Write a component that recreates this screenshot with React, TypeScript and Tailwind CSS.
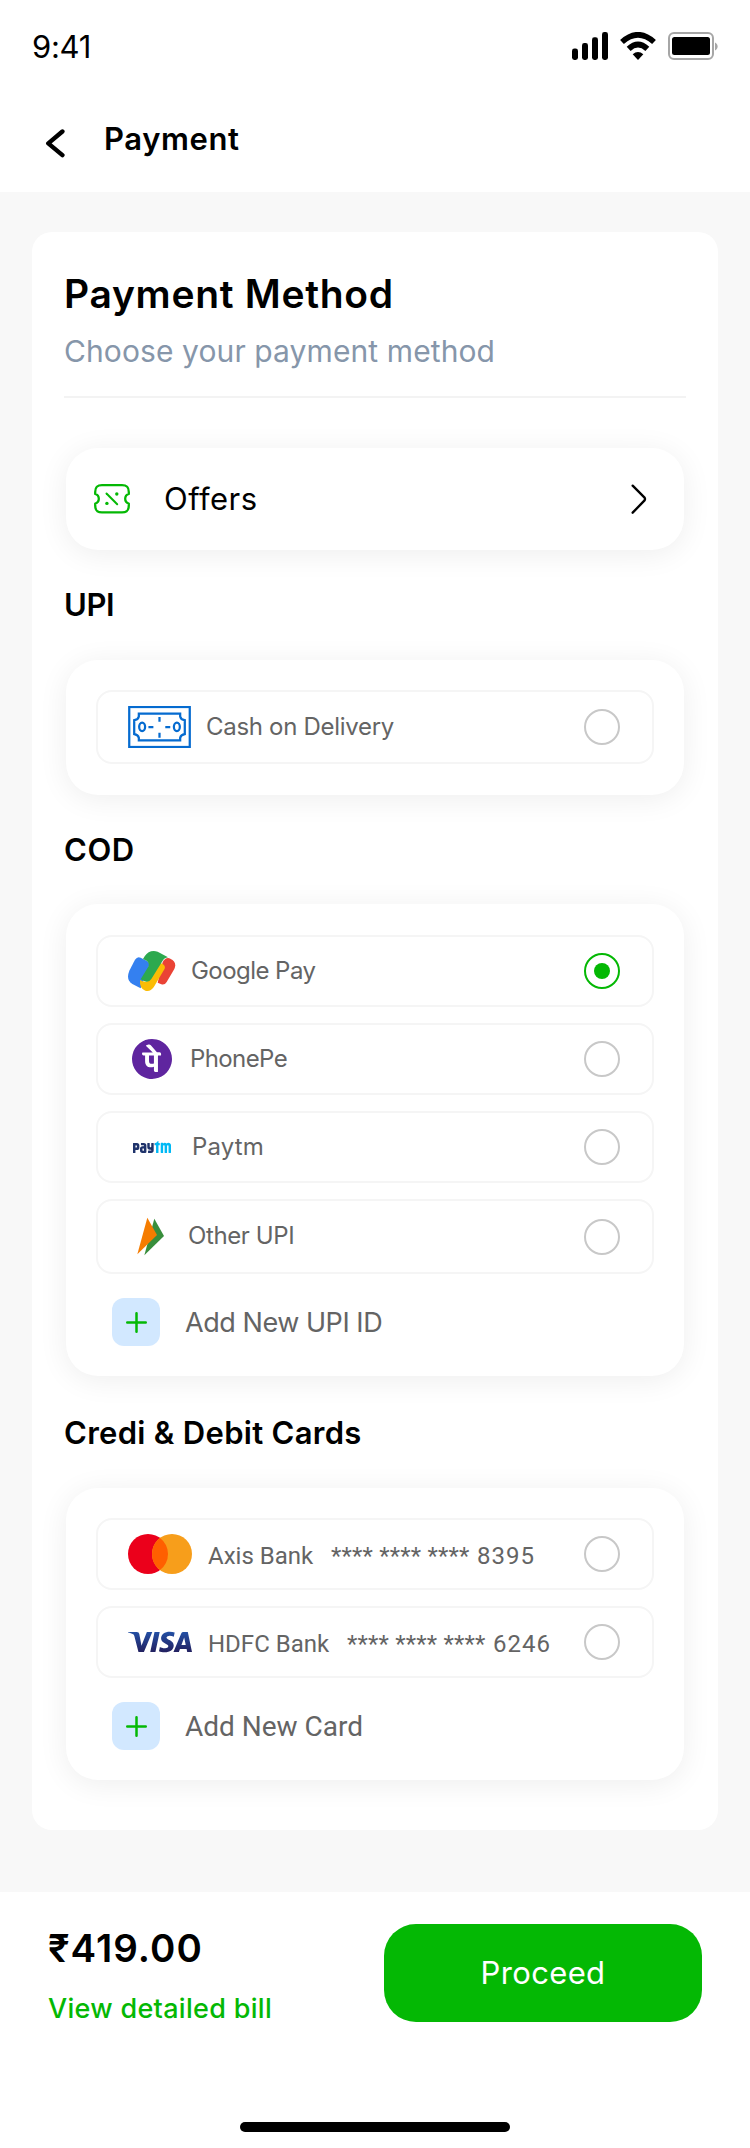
import type { ReactNode } from "react";
import { SiPaytm, SiPhonepe, SiVisa } from "react-icons/si";

function SignalIcon() {
  return (
    <svg className="h-7 w-9" viewBox="0 0 36 28" fill="#000">
      <rect x="0" y="16.5" width="6" height="11.5" rx="2.4" />
      <rect x="10" y="11" width="6" height="17" rx="2.4" />
      <rect x="20" y="5.3" width="6" height="22.7" rx="2.4" />
      <rect x="30" y="0" width="6" height="28" rx="2.4" />
    </svg>
  );
}

function WifiIcon() {
  return (
    <svg className="h-7 w-9" viewBox="735 96 108 84" fill="none" stroke="#000" strokeWidth="17">
      <path d="M741 126Q789 83 837 126" />
      <path d="M761 146.500Q789 120 817 146.500" />
      <path d="M773 163Q789 149 805 163L789 180Z" fill="#000" stroke="none" />
    </svg>
  );
}

function BatteryIcon() {
  return (
    <svg className="h-7 w-[50px]" viewBox="0 0 50 28">
      <rect x="1" y="1" width="44" height="26" rx="5" fill="none" stroke="#a6a6a6" strokeWidth="2" />
      <rect x="4" y="5" width="38" height="18" rx="2.5" fill="#000" />
      <path d="M47 10.500C50.500 12 50.500 17 47 18.500Z" fill="#a6a6a6" />
    </svg>
  );
}

function OffersIcon() {
  return (
    <svg className="h-[30px] w-9" viewBox="0 0 36 30" fill="none" stroke="#04b804" strokeWidth="2.3" strokeLinecap="round" strokeLinejoin="round">
      <path d="M1.200 10V8c0-5 2-6.800 6.800-6.800h20c4.800 0 6.800 1.800 6.800 6.800v2a5 5 0 0 0 0 9.600v2c0 5-2 6.800-6.800 6.800H8c-4.800 0-6.800-1.800-6.800-6.800v-2a5 5 0 0 0 0-9.600z" />
      <path d="M12.500 9.500 23.200 20.200" strokeWidth="2" />
      <circle cx="22.800" cy="10" r="1.700" fill="#04b804" stroke="none" />
      <circle cx="12.900" cy="19.400" r="1.700" fill="#04b804" stroke="none" />
    </svg>
  );
}

function CashIcon() {
  return (
    <svg className="h-[42px] w-[63px]" viewBox="54 48 189 127" fill="none" stroke="#056bd0" strokeWidth="6.800">
      <rect x="57" y="51" width="183" height="121" />
      <path d="M86 71H211V80Q213 90 225 91V133Q213 135 211 144V152H86V144Q84 135 72 133V91Q84 90 86 80Z" />
      <ellipse cx="96" cy="111" rx="9" ry="13" />
      <ellipse cx="201" cy="111" rx="9" ry="13" />
      <path d="M115 112H130M166 112H181M148.500 81V96M148.500 129V144" />
    </svg>
  );
}

function GooglePayIcon() {
  return (
    <svg className="h-[42px] w-12" viewBox="114 148 144 126">
      <path d="M135 177Q142 166 152 171L171 181Q180 186 177 196L152 263L127 250Q107 238 118 210Z" fill="#3480f0" />
      <path d="M218 184Q228 168 241 174Q262 184 253 205L230 244Q224 254 214 251L203 246Z" fill="#ea4335" />
      <path d="M208 185L219 191Q227 196 224 204L191 260Q181 274 166 270Q148 264 150 238Q165 247 175 240Z" fill="#fbbc04" />
      <path d="M159 175L164 167Q178 146 203 153L234 170Q222 172 217 182L184 235Q177 246 164 242L152 236L174 200Q180 190 171 181Z" fill="#2da94f" />
    </svg>
  );
}

function OtherUpiIcon() {
  return (
    <svg className="size-12" viewBox="114 338 144 144">
      <path d="M193 355L222 407L163 465Z" fill="#388e3c" />
      <path d="M172 352L201 404L142 462Z" fill="#f57c00" />
    </svg>
  );
}

function MastercardIcon() {
  return (
    <svg className="h-10 w-16" viewBox="0 0 64 40">
      <circle cx="20" cy="20" r="20" fill="#eb001b" />
      <circle cx="44" cy="20" r="20" fill="#f79e1b" />
      <path d="M32 4a20 20 0 0 1 0 32a20 20 0 0 1 0-32z" fill="#ff5f00" />
    </svg>
  );
}

function Gradients() {
  return (
    <svg className="absolute size-0">
      <defs>
        <linearGradient id="visa" x1="0" y1="0" x2="0" y2="1">
          <stop offset="0" stopColor="#2350a5" />
          <stop offset="1" stopColor="#23205f" />
        </linearGradient>
        <linearGradient id="paytm" x1="0" y1="0" x2="1" y2="0">
          <stop offset="0.57" stopColor="#1f336b" />
          <stop offset="0.57" stopColor="#00b9f5" />
        </linearGradient>
      </defs>
    </svg>
  );
}

function Radio({ checked }: { checked?: boolean }) {
  return checked ? (
    <span className="ml-auto flex size-9 items-center justify-center rounded-full border-[2.5px] border-[#04b804]">
      <span className="size-4 rounded-full bg-[#04b804]" />
    </span>
  ) : (
    <span className="ml-auto size-9 rounded-full border-2 border-[#c8c8c8]" />
  );
}

function Row({ children, className = "h-[72px]", checked }: { children: ReactNode; className?: string; checked?: boolean }) {
  return (
    <div className={`flex items-center rounded-2xl border-2 border-[#f5f5f5] pr-8 pl-[30px] ${className}`}>
      {children}
      <Radio checked={checked} />
    </div>
  );
}

function Panel({ children, className }: { children: ReactNode; className: string }) {
  return <div className={`mx-0.5 rounded-4xl bg-white shadow-[0_4px_30px_rgba(0,0,0,0.07)] ${className}`}>{children}</div>;
}

function Heading({ children, className }: { children: ReactNode; className: string }) {
  return <h2 className={`text-[31px] leading-10 font-semibold ${className}`}>{children}</h2>;
}

function AddButton({ children }: { children: ReactNode }) {
  return (
    <button className="mt-6 ml-4 flex items-center text-[#646464]">
      <span className="flex size-12 items-center justify-center rounded-xl bg-[#d2e8ff]">
        <svg className="size-[21px]" viewBox="0 0 21 21" stroke="#04b804" strokeWidth="2.5" strokeLinecap="round">
          <path d="M10.500 1.250V19.750M1.250 10.500H19.750" />
        </svg>
      </span>
      {children}
    </button>
  );
}

function BankRow({ icon, name, nameClass, last4 }: { icon: ReactNode; name: string; nameClass: string; last4: string }) {
  return (
    <Row>
      {icon}
      <span className="mt-[4px] flex font-['Roboto',sans-serif] text-[24px] leading-8 text-[#646464]">
        <span className={nameClass}>{name}</span>
        <span className="w-[146px] tracking-[0.18px]">**** **** ****</span>
        <span className="tracking-[1px]">{last4}</span>
      </span>
    </Row>
  );
}

export default function App() {
  return (
    <div className="flex h-[2148px] w-[750px] flex-col bg-[#f8f8f8] font-['Inter',sans-serif] text-black">
      <Gradients />
      <header className="h-48 bg-white">
        <div className="flex h-[92px] items-center pr-8 pl-8">
          <span className="mt-[2px] text-[31px] leading-10 -tracking-[0.3px]">9:41</span>
          <span className="ml-auto flex gap-3">
            <SignalIcon />
            <WifiIcon />
            <BatteryIcon />
          </span>
        </div>
        <div className="flex h-[100px] items-center pl-[45px]">
          <svg className="mt-[2px] h-[30px] w-[21px]" viewBox="134 385 64 90" fill="none" stroke="#000" strokeWidth="13.500" strokeLinecap="round" strokeLinejoin="round">
            <path d="M187 395L144 431L187 467" />
          </svg>
          <h1 className="mb-[6px] ml-[38px] text-[31px] leading-10 font-semibold tracking-[0.6px]">Payment</h1>
        </div>
      </header>

      <main className="h-[1700px] px-8 pt-10">
        <section className="h-[1598px] rounded-[20px] bg-white px-8 pt-[38px]">
          <h2 className="text-[39px] leading-12 font-semibold tracking-[0.7px]">Payment Method</h2>
          <p className="mt-[13px] text-[30px] leading-10 tracking-[0.1px] text-[#8696aa]">Choose your payment method</p>
          <hr className="mt-[25px] border-t-2 border-[#f3f3f3]" />

          <Panel className="mt-[50px] flex h-[102px] items-center pr-9 pl-7">
            <OffersIcon />
            <span className="ml-[34px] text-[31px] leading-10 tracking-[0.5px]">Offers</span>
            <svg className="ml-auto h-[30px] w-[18px]" viewBox="150 71 54 90" fill="none" stroke="#000" strokeWidth="7" strokeLinecap="round" strokeLinejoin="round">
              <path d="M158 76L193 111Q197 116 193 121L158 157" />
            </svg>
          </Panel>

          <Heading className="mt-[35px] -tracking-[0.4px]">UPI</Heading>
          <Panel className="mt-[35px] px-[30px] pt-[30px] pb-[31px]">
            <Row className="h-[74px]">
              <CashIcon />
              <span className="mb-px ml-[15px] text-[24px] leading-8 -tracking-[0.3px] text-[#646464]">Cash on Delivery</span>
            </Row>
          </Panel>

          <Heading className="mt-[35px] tracking-[0.6px]">COD</Heading>
          <Panel className="mt-[34px] px-[30px] pt-[31px] pb-[30px]">
            <div className="flex flex-col gap-4 text-[24px] leading-8 text-[#646464]">
              <Row checked>
                <GooglePayIcon />
                <span className="mb-px ml-[15px] -tracking-[0.55px]">Google Pay</span>
              </Row>
              <Row>
                <SiPhonepe className="mx-1 size-10" fill="#5f259f" />
                <span className="ml-[14px] -tracking-[0.6px]">PhonePe</span>
              </Row>
              <Row>
                <SiPaytm className="mx-[5px] size-[38px]" fill="url(#paytm)" />
                <span className="ml-4 tracking-[0.15px]">Paytm</span>
              </Row>
              <Row className="h-[75px]">
                <OtherUpiIcon />
                <span className="mb-px ml-3 -tracking-[0.4px]">Other UPI</span>
              </Row>
            </div>
            <AddButton>
              <span className="mt-[2px] ml-[25px] text-[27px] leading-9 -tracking-[0.45px]">Add New UPI ID</span>
            </AddButton>
          </Panel>

          <Heading className="mt-[37px] tracking-[0.3px]">Credi &amp; Debit Cards</Heading>
          <Panel className="mt-[35px] px-[30px] py-[30px]">
            <div className="flex flex-col gap-4">
              <BankRow icon={<MastercardIcon />} name="Axis Bank" nameClass="ml-4 w-[123px]" last4="8395" />
              <BankRow icon={<SiVisa className="size-16" fill="url(#visa)" />} name="HDFC Bank" nameClass="ml-4 w-[139px]" last4="6246" />
            </div>
            <AddButton>
              <span className="mt-[2px] ml-[25px] font-['Roboto',sans-serif] text-[28px] leading-9">Add New Card</span>
            </AddButton>
          </Panel>
        </section>
      </main>

      <footer className="flex flex-1 flex-col bg-white pt-8">
        <div className="flex justify-between pr-12 pl-12">
          <div className="flex flex-col">
            <span className="text-[38.5px] leading-12 font-semibold tracking-[1px]">₹419.00</span>
            <a className="mt-[17px] text-[27px] leading-10 font-medium tracking-[0.3px] text-[#04b804]">View detailed bill</a>
          </div>
          <button className="h-[98px] w-[318px] rounded-4xl bg-[#04b804] text-[31px] leading-10 tracking-[0.35px] text-white">Proceed</button>
        </div>
        <div className="mx-auto mt-[93px] h-[10px] w-[270px] rounded-full bg-black" />
      </footer>
    </div>
  );
}
